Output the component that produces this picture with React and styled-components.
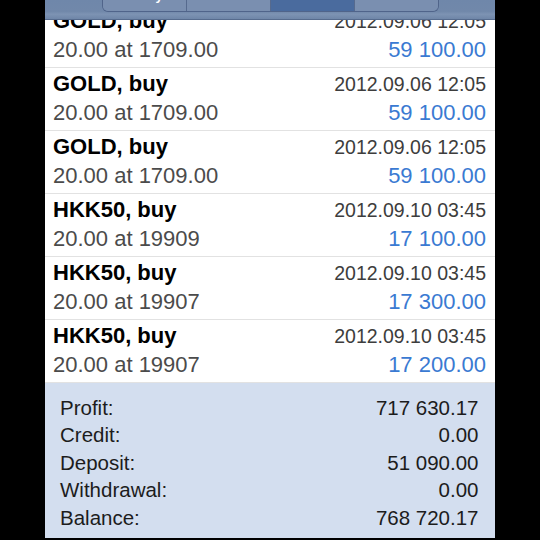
import React from 'react';
import styled, { createGlobalStyle } from 'styled-components';

const GlobalStyle = createGlobalStyle`
  html, body {
    margin: 0;
    padding: 0;
    background: #000;
  }
  body {
    font-family: "Liberation Sans", Arial, sans-serif;
  }
`;

const Screen = styled.div`
  position: relative;
  width: 450px;
  height: 538px;
  margin: 0 auto;
  overflow: hidden;
  background: #fff;
`;

const Toolbar = styled.div`
  position: absolute;
  top: 0;
  left: 0;
  right: 0;
  z-index: 2;
  height: 19px;
  display: flex;
  justify-content: center;
  background: linear-gradient(#6f87aa, #7188aa 60%, #7d93b3 75%, #6f86a8);
  border-bottom: 1px solid #566b8d;
`;

const Segmented = styled.div`
  display: flex;
  width: 335px;
  height: 29px;
  margin-top: -18px;
  border: 1px solid #50648a;
  border-top: none;
  border-radius: 0 0 6px 6px;
  overflow: hidden;
`;

const Segment = styled.div`
  flex: 1;
  display: flex;
  align-items: flex-start;
  justify-content: center;
  padding-top: 7px;
  line-height: 13px;
  color: #fff;
  font-size: 13px;
  font-weight: 700;
  background: ${(props) => (props.$active ? '#4a6b9e' : '#7a8fb0')};
  & + & {
    border-left: 1px solid #566a8e;
  }
`;

const List = styled.div`
  margin-top: 5px;
`;

const Row = styled.div`
  padding: 3px 9px 5px 8px;
  border-bottom: 1px solid #e2e2e2;
`;

const Line = styled.div`
  display: flex;
  justify-content: space-between;
  align-items: baseline;
  height: 25px;
  line-height: 25px;
  overflow: visible;
  & + & {
    margin-top: 4px;
  }
`;

const Title = styled.span`
  font-size: 22px;
  font-weight: 700;
  color: #000;
`;

const Stamp = styled.span`
  font-size: 19.5px;
  color: #3d3d3d;
`;

const Detail = styled.span`
  font-size: 22px;
  color: #4b4b4b;
`;

const Amount = styled.span`
  font-size: 22px;
  color: #3a7ad2;
`;

const Summary = styled.div`
  padding: 10.5px 16.5px 7px 15px;
  background: #d3deef;
`;

const SummaryLine = styled.div`
  display: flex;
  justify-content: space-between;
  font-size: 20.5px;
  line-height: 27.5px;
  color: #1c1c1c;
`;

const trades = [
  { title: 'GOLD, buy', time: '2012.09.06 12:05', detail: '20.00 at 1709.00', amount: '59 100.00' },
  { title: 'GOLD, buy', time: '2012.09.06 12:05', detail: '20.00 at 1709.00', amount: '59 100.00' },
  { title: 'GOLD, buy', time: '2012.09.06 12:05', detail: '20.00 at 1709.00', amount: '59 100.00' },
  { title: 'HKK50, buy', time: '2012.09.10 03:45', detail: '20.00 at 19909', amount: '17 100.00' },
  { title: 'HKK50, buy', time: '2012.09.10 03:45', detail: '20.00 at 19907', amount: '17 300.00' },
  { title: 'HKK50, buy', time: '2012.09.10 03:45', detail: '20.00 at 19907', amount: '17 200.00' },
];

const totals = [
  ['Profit:', '717 630.17'],
  ['Credit:', '0.00'],
  ['Deposit:', '51 090.00'],
  ['Withdrawal:', '0.00'],
  ['Balance:', '768 720.17'],
];

const App = () => {
  return (
    <Screen>
      <GlobalStyle />
      <Toolbar>
        <Segmented>
          <Segment>Today</Segment>
          <Segment>Week</Segment>
          <Segment $active>Month</Segment>
          <Segment>Custom</Segment>
        </Segmented>
      </Toolbar>
      <List>
        {trades.map((t, i) => (
          <Row key={i}>
            <Line>
              <Title>{t.title}</Title>
              <Stamp>{t.time}</Stamp>
            </Line>
            <Line>
              <Detail>{t.detail}</Detail>
              <Amount>{t.amount}</Amount>
            </Line>
          </Row>
        ))}
      </List>
      <Summary>
        {totals.map(([label, value]) => (
          <SummaryLine key={label}>
            <span>{label}</span>
            <span>{value}</span>
          </SummaryLine>
        ))}
      </Summary>
    </Screen>
  );
};

export default App;
